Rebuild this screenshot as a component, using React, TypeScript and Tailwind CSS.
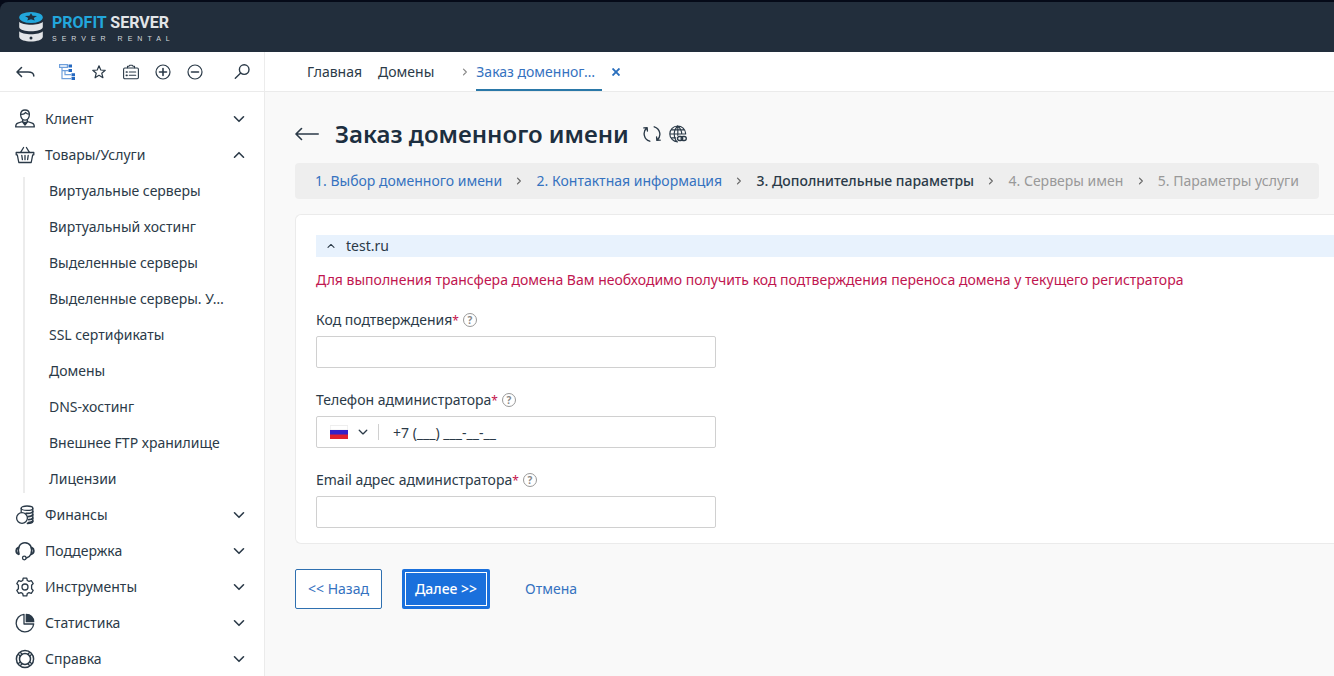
import { useState } from "react";
import type { ReactNode, SVGProps } from "react";

type IconProps = SVGProps<SVGSVGElement>;

const Icon = ({ children, ...props }: IconProps) => (
  <svg
    width="20"
    height="20"
    viewBox="0 0 20 20"
    fill="none"
    stroke="currentColor"
    strokeWidth="1.3"
    strokeLinecap="round"
    strokeLinejoin="round"
    aria-hidden="true"
    {...props}
  >
    {children}
  </svg>
);

const ChevronDown = (props: IconProps) => (
  <Icon width="12" height="12" viewBox="0 0 12 12" strokeWidth="1.6" {...props}>
    <path d="M1.5 3.8 6 8.300l4.500-4.500" />
  </Icon>
);

const ChevronRight = (props: IconProps) => (
  <Icon width="6" height="10" viewBox="0 0 6 10" strokeWidth="1.2" {...props}>
    <path d="M1.500 2.200 4.300 5 1.500 7.800" />
  </Icon>
);

const ClientIcon = () => (
  <Icon>
    <path d="M5.600 5.600C5.600 2.300 7.400 1 10 1s4.400 1.300 4.400 4.600c0 3-1.900 5.600-4.400 5.600S5.600 8.600 5.600 5.600Z" />
    <path d="M5.800 5.200c1.800.3 3.800-.3 4.900-1.700.7 1 1.800 1.600 3.500 1.700" />
    <path d="M7.600 10.800v1.700L2.800 14.200C1.300 14.700.7 16.300.7 17.900h18.600c0-1.600-.6-3.200-2.100-3.700l-4.800-1.700v-1.700" />
    <path d="m7.500 12.800 2.500 3.200 2.500-3.200-2.500.8Z" fill="currentColor" />
  </Icon>
);

const BasketIcon = () => (
  <Icon>
    <path d="M1.200 7.500h17.600v2.300h-1.100L16.200 17.500H3.800L2.300 9.800H1.200Z" />
    <path d="M5.600 7.300 8.600 2.500M14.400 7.300l-3-4.800M6.800 10.500l.6 4.200M10 10.500v4.200M13.200 10.500l-.6 4.200" />
  </Icon>
);

const FinanceIcon = () => (
  <Icon>
    <ellipse cx="12" cy="3.200" rx="5.800" ry="2.200" />
    <path d="M6.200 3.200v4M17.800 3.200v13.300c0 1.200-2 2-5.500 2" />
    <path d="M17.800 6.500c-.5 1.400-3.600 2-6.800 1.800M17.800 9.700c-.5 1.200-2.500 1.900-4.800 1.900M17.800 12.900c-.5 1.100-2.200 1.700-4.200 1.700M17.800 16c-.5 1-2.200 1.500-4.500 1.600" strokeWidth="1.700" />
    <circle cx="7" cy="13" r="5.400" />
  </Icon>
);

const SupportIcon = () => (
  <Icon>
    <path d="M4 13C2.300 6.500 4.800 1.800 10 1.800s7.700 4.700 6 11.200c-.8 2.100-2.400 3.400-4.600 4" strokeWidth="1.500" />
    <path d="M3.200 6.800C1.900 7.300 1.300 8.500 1.300 9.800s.7 2.800 2.200 3.300M16.800 6.800c1.300.5 1.900 1.700 1.900 3s-.7 2.800-2.200 3.300" strokeWidth="2" />
    <circle cx="9.300" cy="17" r="1.800" />
  </Icon>
);

const ToolsIcon = () => (
  <Icon>
    <path d="M8.200 1.200h3.600l.5 2.300 1.700.9 2.300-.8 1.900 2.900-1.600 1.800v3.400l1.600 1.800-1.900 2.900-2.300-.8-1.700.9-.5 2.300H8.200l-.5-2.300-1.700-.9-2.300.8-1.900-2.900 1.600-1.800V8.300L1.800 6.500l1.900-2.900 2.300.8 1.700-.9Z" />
    <circle cx="10" cy="10" r="3" />
  </Icon>
);

const StatsIcon = () => (
  <Icon>
    <path d="M9 1.300A8.800 8.800 0 1 0 18.700 11H9Z" />
    <path d="M11.300 1.300v7.400h7.400c0-4.200-3.200-7.400-7.400-7.400Z" fill="currentColor" />
  </Icon>
);

const HelpIcon = () => (
  <Icon>
    <circle cx="10" cy="10" r="8.600" strokeWidth="1.500" />
    <circle cx="10" cy="10" r="5.500" strokeWidth="1.500" />
    <path d="m3.500 5.500 1.900 1.700M5.500 3.500l1.700 1.900M16.500 5.500l-1.900 1.700M14.500 3.500l-1.700 1.900M3.500 14.500l1.900-1.700M5.500 16.500l1.700-1.900M16.500 14.500l-1.900-1.700M14.500 16.500l-1.700-1.900" />
  </Icon>
);

const products = [
  "Виртуальные серверы",
  "Виртуальный хостинг",
  "Выделенные серверы",
  "Выделенные серверы. У…",
  "SSL сертификаты",
  "Домены",
  "DNS-хостинг",
  "Внешнее FTP хранилище",
  "Лицензии",
];

const menu: { label: string; icon: ReactNode; items?: string[] }[] = [
  { label: "Клиент", icon: <ClientIcon /> },
  { label: "Товары/Услуги", icon: <BasketIcon />, items: products },
  { label: "Финансы", icon: <FinanceIcon /> },
  { label: "Поддержка", icon: <SupportIcon /> },
  { label: "Инструменты", icon: <ToolsIcon /> },
  { label: "Статистика", icon: <StatsIcon /> },
  { label: "Справка", icon: <HelpIcon /> },
];

const steps = [
  "1. Выбор доменного имени",
  "2. Контактная информация",
  "3. Дополнительные параметры",
  "4. Серверы имен",
  "5. Параметры услуги",
];
const currentStep = 2;

const Header = () => (
  <header className="bg-[#050a18] pt-0.5">
    <div className="flex h-[50px] items-center rounded-tl-lg bg-[#222e3c] pl-[18px]">
      <a href="#" className="flex items-center gap-2">
        <svg width="26" height="32" viewBox="0 0 26 32" aria-hidden="true">
          <ellipse cx="13" cy="6.500" rx="11.800" ry="5.500" fill="#22a7dc" />
          <path d="m13 2.300 1.600 2.500 4.400.3-3.200 1.800.9 2.700L13 8.300 9.300 9.600l.9-2.700L7 5.100l4.400-.3Z" fill="#222e3c" />
          <path d="M1.200 10.800c3 4 20.600 4 23.600 0v5.400c-1.200 5.400-22.400 5.400-23.600 0Z" fill="#e3e5e8" />
          <path d="M1.200 20.300c3 4 20.600 4 23.600 0V26c-1.200 6-22.400 6-23.600 0Z" fill="#e3e5e8" />
          <circle cx="13" cy="27" r="1.500" fill="#222e3c" />
        </svg>
        <span className="flex flex-col">
          <span className="pt-0.5 font-[Roboto,sans-serif] text-base leading-5 font-bold text-[#e3e5e8]">
            <span className="text-[#22a7dc]">PROFIT</span> SERVER
          </span>
          <span className="pt-0.5 font-['Liberation_Sans',sans-serif] text-[7px] leading-2 tracking-[5px] text-[#d5d9de]">SERVER RENTAL</span>
        </span>
      </a>
    </div>
  </header>
);

const ToolButton = ({ label, children }: { label: string; children: ReactNode }) => (
  <button type="button" aria-label={label} className="flex size-4 items-center justify-center">
    {children}
  </button>
);

const Toolbar = () => (
  <div className="flex h-10 border-b border-[#ebebeb] bg-white">
    <div className="flex w-[265px] shrink-0 items-center gap-4 border-r border-[#ececec] pr-3.5 pl-4">
      <button type="button" aria-label="Свернуть меню" className="mr-2">
        <Icon width="19" height="14" viewBox="0 0 19 14" strokeWidth="1.500">
          <path d="M5.500 2.500 1 7l4.500 4.500M1.200 7H12c3.800 0 5.800 1.300 5.800 4" />
        </Icon>
      </button>
      <ToolButton label="Дерево">
        <svg width="16" height="16" viewBox="0 0 16 16" aria-hidden="true">
          <path d="M.6.600h7.800v2.800H.6ZM3 3.400v11.200h9M3 6.600h6.500M6 6.600v4h6" stroke="#6fa0dc" strokeWidth="1.200" fill="none" />
          <path d="M9.500 0.500h3.500v3H9.500ZM9.500 5h3.500v3H9.500ZM12.500 9.200H16v3h-3.500ZM12.500 13H16v3h-3.500Z" fill="#2468c0" />
        </svg>
      </ToolButton>
      <ToolButton label="Избранное">
        <Icon width="16" height="16" strokeWidth="1.500">
          <path d="m10 2.200 2.200 5.300 5.600.4-4.300 3.700 1.400 5.600-4.900-3-4.900 3 1.400-5.600-4.300-3.700 5.600-.4Z" />
        </Icon>
      </ToolButton>
      <ToolButton label="Карточка">
        <Icon width="16" height="16" viewBox="0 0 16 16" strokeWidth="1.100">
          <rect x=".6" y="4" width="14.800" height="10.800" rx="1.200" />
          <path d="M4.500 3.800V2.200H6L7 1.200h2l1 1h1.500v1.600M6.300 8h6.400M6.300 11.300h6.400" />
          <path d="M3.400 8h.6M3.400 11.300h.6" strokeWidth="1.700" />
        </Icon>
      </ToolButton>
      <ToolButton label="Развернуть все">
        <Icon width="16" height="16" viewBox="0 0 16 16" strokeWidth="1.200">
          <circle cx="8" cy="8" r="7" />
          <path d="M8 4.500v7M4.500 8h7" strokeWidth="1.600" />
        </Icon>
      </ToolButton>
      <ToolButton label="Свернуть все">
        <Icon width="16" height="16" viewBox="0 0 16 16" strokeWidth="1.200">
          <circle cx="8" cy="8" r="7" />
          <path d="M4.500 8h7" strokeWidth="1.600" />
        </Icon>
      </ToolButton>
      <button type="button" aria-label="Поиск" className="ml-auto">
        <Icon width="16" height="16" viewBox="0 0 16 16" strokeWidth="1.400">
          <circle cx="10.200" cy="5.600" r="4.800" />
          <path d="m6.700 9-5.400 5.200" />
        </Icon>
      </button>
    </div>
    <nav className="flex items-center pl-[42px]">
      <a href="#" className="mr-4">Главная</a>
      <a href="#">Домены</a>
      <ChevronRight className="mr-2 ml-7 text-[#888]" />
      <a href="#" className="flex h-full w-[126px] items-center border-b-2 border-[#2a78a8] pt-0.5 whitespace-nowrap text-[#3572c0]">
        Заказ доменног…
      </a>
      <button type="button" aria-label="Закрыть вкладку" className="ml-2.5 text-[#2a6fbd]">
        <Icon width="8" height="8" viewBox="0 0 8 8" strokeWidth="1.900" strokeLinecap="butt">
          <path d="m.5.5 7 7M7.500.5l-7 7" />
        </Icon>
      </button>
    </nav>
  </div>
);

const Sidebar = () => {
  const [open, setOpen] = useState("Товары/Услуги");
  return (
    <aside className="w-[265px] shrink-0 border-r border-[#ebebeb] bg-white pt-[9px]">
      {menu.map(({ label, icon, items }) => (
        <div key={label}>
          <button
            type="button"
            onClick={() => setOpen(open === label ? "" : label)}
            className="flex h-9 w-full items-center gap-2.5 pr-[19px] pl-[15px] text-left"
          >
            {icon}
            <span className="grow">{label}</span>
            <ChevronDown className={items && open === label ? "rotate-180" : ""} />
          </button>
          {items && open === label && (
            <ul className="my-1 ml-[23px] flex flex-col border-l-2 border-[#ececec]">
              {items.map((item) => (
                <li key={item} className="first:-mt-1 last:-mb-1">
                  <a href="#" className="block pl-6 leading-9 whitespace-nowrap">{item}</a>
                </li>
              ))}
            </ul>
          )}
        </div>
      ))}
    </aside>
  );
};

const Steps = () => (
  <ol className="mr-[15px] flex h-9 items-center justify-between rounded-sm bg-[#eeeeee] px-5 whitespace-nowrap">
    {steps.map((step, i) => (
      <li key={step} className="contents">
        {i > 0 && <ChevronRight className="text-[#666]" />}
        {i < currentStep && <a href="#" className="text-[#3572c0]">{step}</a>}
        {i === currentStep && <span aria-current="step" className="font-medium">{step}</span>}
        {i > currentStep && <span className="text-[#999]">{step}</span>}
      </li>
    ))}
  </ol>
);

const Field = ({ id, label, children }: { id: string; label: string; children: ReactNode }) => (
  <div className="w-[400px]">
    <div className="flex h-8 items-center gap-1">
      <label htmlFor={id}>
        {label}
        <span className="text-xs text-[#c4124a]">*</span>
      </label>
      <button
        type="button"
        aria-label="Подсказка"
        className="flex size-3.5 items-center justify-center rounded-full border border-[#999] text-[10px] leading-none font-bold text-[#888]"
      >
        ?
      </button>
    </div>
    {children}
  </div>
);

const inputClass = "block h-8 w-full rounded-xs border border-[#d0d0d0] bg-white px-3 outline-none";

const PhoneInput = () => (
  <div className="flex h-8 items-center rounded-xs border border-[#d0d0d0] bg-white pl-[13px]">
    <div className="relative flex h-4 items-center gap-2.5 border-r border-[#d0d0d0] pr-2.5">
      <svg width="18" height="14" viewBox="0 0 18 14" aria-hidden="true">
        <path fill="#fff" stroke="#ddd" strokeWidth=".5" d="M.3.500h17.400V5H.3Z" />
        <path fill="#3520c8" d="M0 5h18v5H0Z" />
        <path fill="#e01f2d" d="M0 9.500h18V14H0Z" />
      </svg>
      <ChevronDown width="10" height="10" />
      <select aria-label="Страна" className="absolute inset-0 w-full opacity-0">
        <option>RU</option>
      </select>
    </div>
    <input id="phone" type="tel" defaultValue="+7 (___) ___-__-__" className="h-full min-w-0 grow pl-3.5 outline-none" />
  </div>
);

const App = () => {
  return (
    <div className="flex min-h-screen flex-col bg-[#f9f9f9] font-['Noto_Sans',sans-serif] text-sm text-[#2b3a48]">
      <Header />
      <Toolbar />
      <div className="flex grow">
        <Sidebar />
        <main className="min-w-0 grow overflow-hidden pl-[30px]">
          <div className="flex h-[71px] items-center pt-3">
            <a href="#" aria-label="Назад">
              <Icon width="24" height="14" viewBox="0 0 24 14" strokeWidth="1.600">
                <path d="M6.500 1.500 1 7l5.500 5.500M1.200 7h22" />
              </Icon>
            </a>
            <h1 className="ml-4 text-2xl font-semibold text-[#1d2f40]">Заказ доменного имени</h1>
            <button type="button" aria-label="Обновить" className="ml-3.5">
              <Icon width="18" height="18">
                <path d="M7.500 18A8.600 8.600 0 0 1 4.300 3.200M.9 3.200l3.700-.3.300 3.800M12.500 2a8.600 8.600 0 0 1 3.200 14.800M19.100 16.800l-3.700.3-.3-3.800" strokeWidth="1.500" />
              </Icon>
            </button>
            <button type="button" aria-label="Ссылка" className="ml-2">
              <Icon width="18" height="18">
                <path d="M18.500 9.500A8.800 8.800 0 1 0 9.500 18.700M9.800 1C4.600 5.800 4.600 13.500 8.500 18.500M9.800 1c2.800 2.500 4.200 5.500 4.300 9M9.800 1v10.500M2.300 5.500h15M1 10h17.500M2.300 14.300h5.200" />
                <rect x="9.500" y="12.800" width="5.700" height="4.400" rx="2.200" strokeWidth="1.500" />
                <rect x="13.500" y="12.800" width="5.700" height="4.400" rx="2.200" strokeWidth="1.500" />
              </Icon>
            </button>
          </div>

          <Steps />

          <form>
            <section className="mt-[15px] rounded-l-md border-y border-l border-[#ebebeb] bg-white pt-5 pb-[15px] pl-5">
              <button type="button" className="flex h-[22px] w-full items-center gap-[11px] bg-[#e8f2fd] pl-[11px] text-left">
                <ChevronDown width="8" height="8" className="rotate-180" />
                test.ru
              </button>
              <p className="mt-[13px] mb-3.5 leading-5 text-[#bf1650]">
                Для выполнения трансфера домена Вам необходимо получить код подтверждения переноса домена у текущего регистратора
              </p>
              <div className="flex flex-col gap-4">
                <Field id="code" label="Код подтверждения">
                  <input id="code" type="text" className={inputClass} />
                </Field>
                <Field id="phone" label="Телефон администратора">
                  <PhoneInput />
                </Field>
                <Field id="email" label="Email адрес администратора">
                  <input id="email" type="email" className={inputClass} />
                </Field>
              </div>
            </section>

            <div className="mt-[25px] flex h-10">
              <button type="button" className="w-[87px] rounded-xs border border-[#2f70b0] bg-white text-[#3572c0]">
                &lt;&lt; Назад
              </button>
              <button type="button" className="ml-5 w-[88px] rounded-xs bg-[#1a70dc] p-[3px] font-medium text-white">
                <span className="flex h-full items-center justify-center border border-white">Далее &gt;&gt;</span>
              </button>
              <button type="button" className="ml-[35px] text-[#3572c0]">Отмена</button>
            </div>
          </form>
        </main>
      </div>
    </div>
  );
};

export default App;
